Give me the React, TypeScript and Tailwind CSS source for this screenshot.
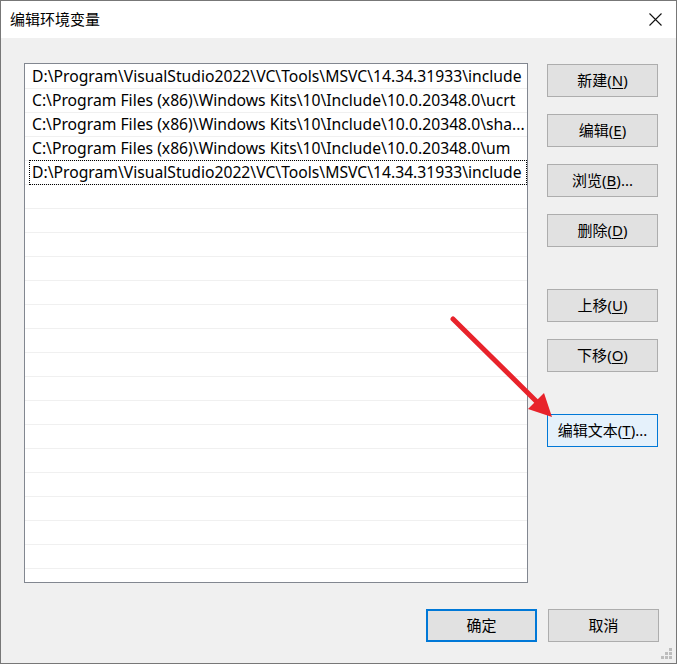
import React from 'react';

const paths = [
  'D:\\Program\\VisualStudio2022\\VC\\Tools\\MSVC\\14.34.31933\\include',
  'C:\\Program Files (x86)\\Windows Kits\\10\\Include\\10.0.20348.0\\ucrt',
  'C:\\Program Files (x86)\\Windows Kits\\10\\Include\\10.0.20348.0\\sha...',
  'C:\\Program Files (x86)\\Windows Kits\\10\\Include\\10.0.20348.0\\um',
  'D:\\Program\\VisualStudio2022\\VC\\Tools\\MSVC\\14.34.31933\\include',
];

const EMPTY_ROWS = 17;

interface BtnProps {
  label: string;
  mnemonic?: string;
  suffix?: string;
  className?: string;
}

const Btn = ({ label, mnemonic, suffix, className = '' }: BtnProps) => (
  <div
    className={`w-[111px] h-[33px] flex items-center justify-center text-[15px] text-black border ${className}`}
  >
    <span>
      {label}
      {mnemonic && (
        <>
          (<span className="underline underline-offset-2">{mnemonic}</span>)
        </>
      )}
      {suffix}
    </span>
  </div>
);

const normal = 'bg-[#e1e1e1] border-[#adadad]';

export default function App() {
  return (
    <div className="relative w-[677px] h-[664px] flex flex-col border border-[#777777] bg-[#f0f0f0] font-['Noto_Sans','Noto_Sans_CJK_SC',sans-serif] text-black overflow-hidden">
      {/* Title bar */}
      <div className="h-[37px] bg-white flex items-center justify-between pl-[9px] pr-[14px] shrink-0">
        <span className="text-[15px] leading-none">编辑环境变量</span>
        <svg width="13" height="13" viewBox="0 0 13 13">
          <path d="M0.5 0.5 L12.5 12.5 M12.5 0.5 L0.5 12.5" stroke="#111" strokeWidth="1.1" />
        </svg>
      </div>

      {/* Body */}
      <div className="flex-1 flex flex-col pt-[25px] pl-[23px] pr-[17px]">
        <div className="flex">
          {/* Path list */}
          <div className="w-[504px] h-[520px] bg-white border border-[#828790] pt-px overflow-hidden">
            {paths.map((p, i) => (
              <div
                key={i}
                className="relative h-[24px] border-b border-[#f0f0f0] flex items-center pl-[7px] text-[15.7px] whitespace-nowrap"
              >
                {i === paths.length - 1 && (
                  <span className="absolute left-[4px] right-0 -top-px bottom-[-1px] border border-dotted border-black" />
                )}
                <span className="relative">{p}</span>
              </div>
            ))}
            {Array.from({ length: EMPTY_ROWS }).map((_, i) => (
              <div key={`e${i}`} className="h-[24px] border-b border-[#f0f0f0]" />
            ))}
          </div>

          {/* Action buttons */}
          <div className="ml-[19px] mt-px flex flex-col">
            <Btn label="新建" mnemonic="N" className={normal} />
            <Btn label="编辑" mnemonic="E" className={`${normal} mt-[17px]`} />
            <Btn label="浏览" mnemonic="B" suffix="..." className={`${normal} mt-[17px]`} />
            <Btn label="删除" mnemonic="D" className={`${normal} mt-[17px]`} />
            <Btn label="上移" mnemonic="U" className={`${normal} mt-[42px]`} />
            <Btn label="下移" mnemonic="O" className={`${normal} mt-[17px]`} />
            <Btn
              label="编辑文本"
              mnemonic="T"
              suffix="..."
              className="bg-[#e5f1fb] border-[#0078d7] mt-[42px]"
            />
          </div>
        </div>

        {/* OK / Cancel */}
        <div className="flex justify-end gap-[11px] mt-[26px]">
          <Btn label="确定" className="bg-[#e1e1e1] border-2 border-[#0078d7]" />
          <Btn label="取消" className={normal} />
        </div>
      </div>

      {/* Size grip */}
      <svg className="absolute right-[3px] bottom-[3px]" width="12" height="12" viewBox="0 0 12 12">
        <rect x="8" y="0" width="3" height="3" fill="#bdbdbd" />
        <rect x="4" y="4" width="3" height="3" fill="#bdbdbd" />
        <rect x="8" y="4" width="3" height="3" fill="#bdbdbd" />
        <rect x="0" y="8" width="3" height="3" fill="#bdbdbd" />
        <rect x="4" y="8" width="3" height="3" fill="#bdbdbd" />
        <rect x="8" y="8" width="3" height="3" fill="#bdbdbd" />
      </svg>

      {/* Red annotation arrow */}
      <svg className="absolute left-0 top-0 pointer-events-none" width="677" height="664" viewBox="0 0 677 664">
        <line x1="452" y1="318" x2="537" y2="402" stroke="#e8232b" strokeWidth="5" strokeLinecap="round" />
        <polygon points="551,416 527,408 543,392" fill="#e8232b" />
      </svg>
    </div>
  );
}
